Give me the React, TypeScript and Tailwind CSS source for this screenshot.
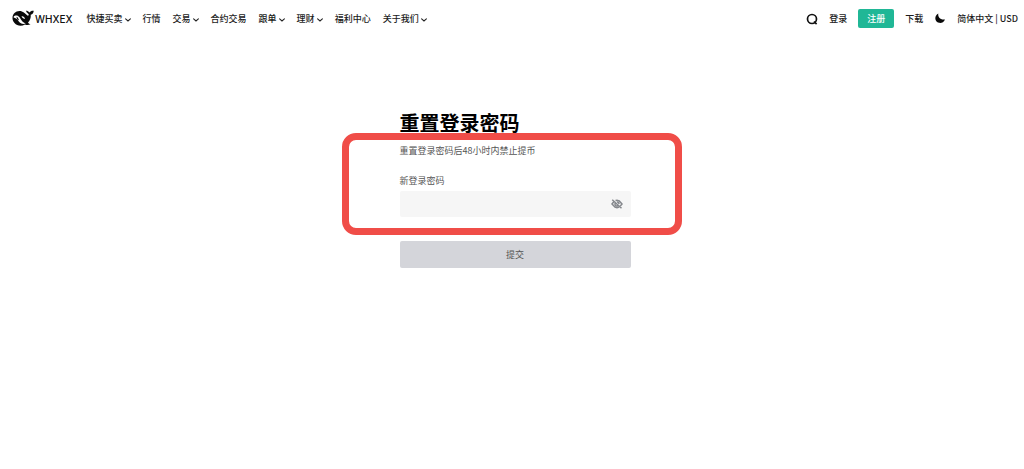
import { useState } from 'react';

type NavItem = { label: string; menu?: boolean };

const navItems: NavItem[] = [
  { label: '快捷买卖', menu: true },
  { label: '行情' },
  { label: '交易', menu: true },
  { label: '合约交易' },
  { label: '跟单', menu: true },
  { label: '理财', menu: true },
  { label: '福利中心' },
  { label: '关于我们', menu: true },
];

function WhaleLogo() {
  return (
    <svg viewBox="0 0 44 34" className="h-[17px] w-[22px]" aria-hidden="true">
      <path
        fill="#0a0a0a"
        d="M1 16C1 8 7 2 15 2c7 0 11 5 16 9 1.500 1 2.500 0 2.500-2C33 7 29 6 28 1.500c3 0 5 1 7 3.500C37 2 40 1 43.500 1.500 43 6 41 8.500 37.500 9.500 38 16 36 21 32 25c1.500 2 3 3 5 3.500-3.500 2-7.500 2-11 .5C19 33 10 32 5 26c-3-3-4-6.500-4-10Z"
      />
      <path fill="#fff" d="M3 14c2-3 6-3.500 9-2 4 2 5 7 8.500 10.500 2 2 4 3.500 7 4-4 2.500-9 1.500-12-1.500C12 22 11 18 7 16.500c-1.500-.5-3.500-1-4-2.500Z" />
      <path fill="#0a0a0a" d="M9 13.500c3 1 4 4 5 7-3-.5-5-3-5-7Z" />
      <path fill="#fff" d="M19 13c3-1 6 1 7 5-2.500-.5-5.500-2-7-5Z" />
    </svg>
  );
}

function Chevron() {
  return (
    <svg viewBox="0 0 6 6" className="mt-0.5 size-1.5" fill="none" aria-hidden="true">
      <path d="M.6 1.800 3 4 5.400 1.800" stroke="#222" strokeWidth="1.100" strokeLinecap="round" />
    </svg>
  );
}

function EyeOff() {
  return (
    <svg viewBox="0 0 24 24" className="h-3 w-3" fill="none" stroke="#85888d" strokeWidth="3" aria-hidden="true">
      <path d="M6 7 2 12l6 6 4 1.500 4.500-1.500M9 5l3-.5L16.500 6l5.500 6-3.500 4" />
      <path d="M8.500 10a4 4 0 0 0 5.500 5.500M12 8a4 4 0 0 1 4 4M2.500 3.500l18.500 17" />
    </svg>
  );
}

export default function App() {
  const [password, setPassword] = useState('');
  const [visible, setVisible] = useState(false);

  return (
    <div className="min-h-screen bg-white font-['Noto_Sans_CJK_SC',sans-serif] text-[9px] leading-3 text-[#1c1c1c]">
      <header className="flex h-9 items-center justify-between pr-1.5 pl-3 pt-px font-medium whitespace-nowrap">
        <div className="flex items-center gap-3.5">
          <a href="#" className="flex items-center gap-px font-['Inter',sans-serif] text-[10px] leading-4 text-[#111]">
            <WhaleLogo />
            <span>WHXEX</span>
          </a>
          <nav className="flex items-center gap-3">
            {navItems.map((item) =>
              item.menu ? (
                <button key={item.label} type="button" className="flex items-center gap-0.5">
                  {item.label}
                  <Chevron />
                </button>
              ) : (
                <a key={item.label} href="#">
                  {item.label}
                </a>
              ),
            )}
          </nav>
        </div>
        <div className="flex items-center gap-[11px]">
          <button type="button" aria-label="搜索">
            <svg viewBox="0 0 12 12" className="size-3" fill="none" stroke="#111" strokeWidth="1.700" aria-hidden="true">
              <circle cx="6" cy="6" r="4.500" />
              <path d="m8 8.500 2.600 2.600" />
            </svg>
          </button>
          <a href="#">登录</a>
          <a href="#" className="flex h-[19px] w-9 items-center justify-center rounded-xs bg-[#20b796] text-white">
            注册
          </a>
          <a href="#">下载</a>
          <button type="button" aria-label="深色模式">
            <svg viewBox="0 0 12 12" className="size-3" aria-hidden="true">
              <path fill="#0a0a0a" d="M4.300 .5C3.600 4 6.500 7.200 11 6.400 9.800 9.200 7.300 10.400 5 9.800.400 8.700.100 2.700 4.300.5Z" />
            </svg>
          </button>
          <button type="button">简体中文 | USD</button>
        </div>
      </header>

      <div className="flex justify-center pt-[74px] pl-1.5">
        <main className="w-[231px] text-[#555]">
          <h1 className="text-[20px] leading-[26px] font-bold text-black">重置登录密码</h1>
          <form onSubmit={(event) => event.preventDefault()}>
            <div className="relative pt-[9px]">
              <div className="pointer-events-none absolute -top-[3px] -right-[51px] -bottom-[18px] -left-[58px] rounded-[14px] border-[7px] border-[#f04d48]" />
              <p>重置登录密码后48小时内禁止提币</p>
              <label htmlFor="new-password" className="mt-[18px] block">
                新登录密码
              </label>
              <div className="mt-1 flex h-[26px] items-center rounded-xs bg-[#f6f6f6] pr-2">
                <input
                  id="new-password"
                  type={visible ? 'text' : 'password'}
                  value={password}
                  onChange={(event) => setPassword(event.target.value)}
                  className="h-full min-w-0 flex-1 bg-transparent px-2 outline-none"
                />
                <button type="button" aria-label="显示密码" onClick={() => setVisible(!visible)}>
                  <EyeOff />
                </button>
              </div>
            </div>
            <button type="submit" className="mt-6 h-[27px] w-full rounded-xs bg-[#d4d5da]">
              提交
            </button>
          </form>
        </main>
      </div>
    </div>
  );
}
